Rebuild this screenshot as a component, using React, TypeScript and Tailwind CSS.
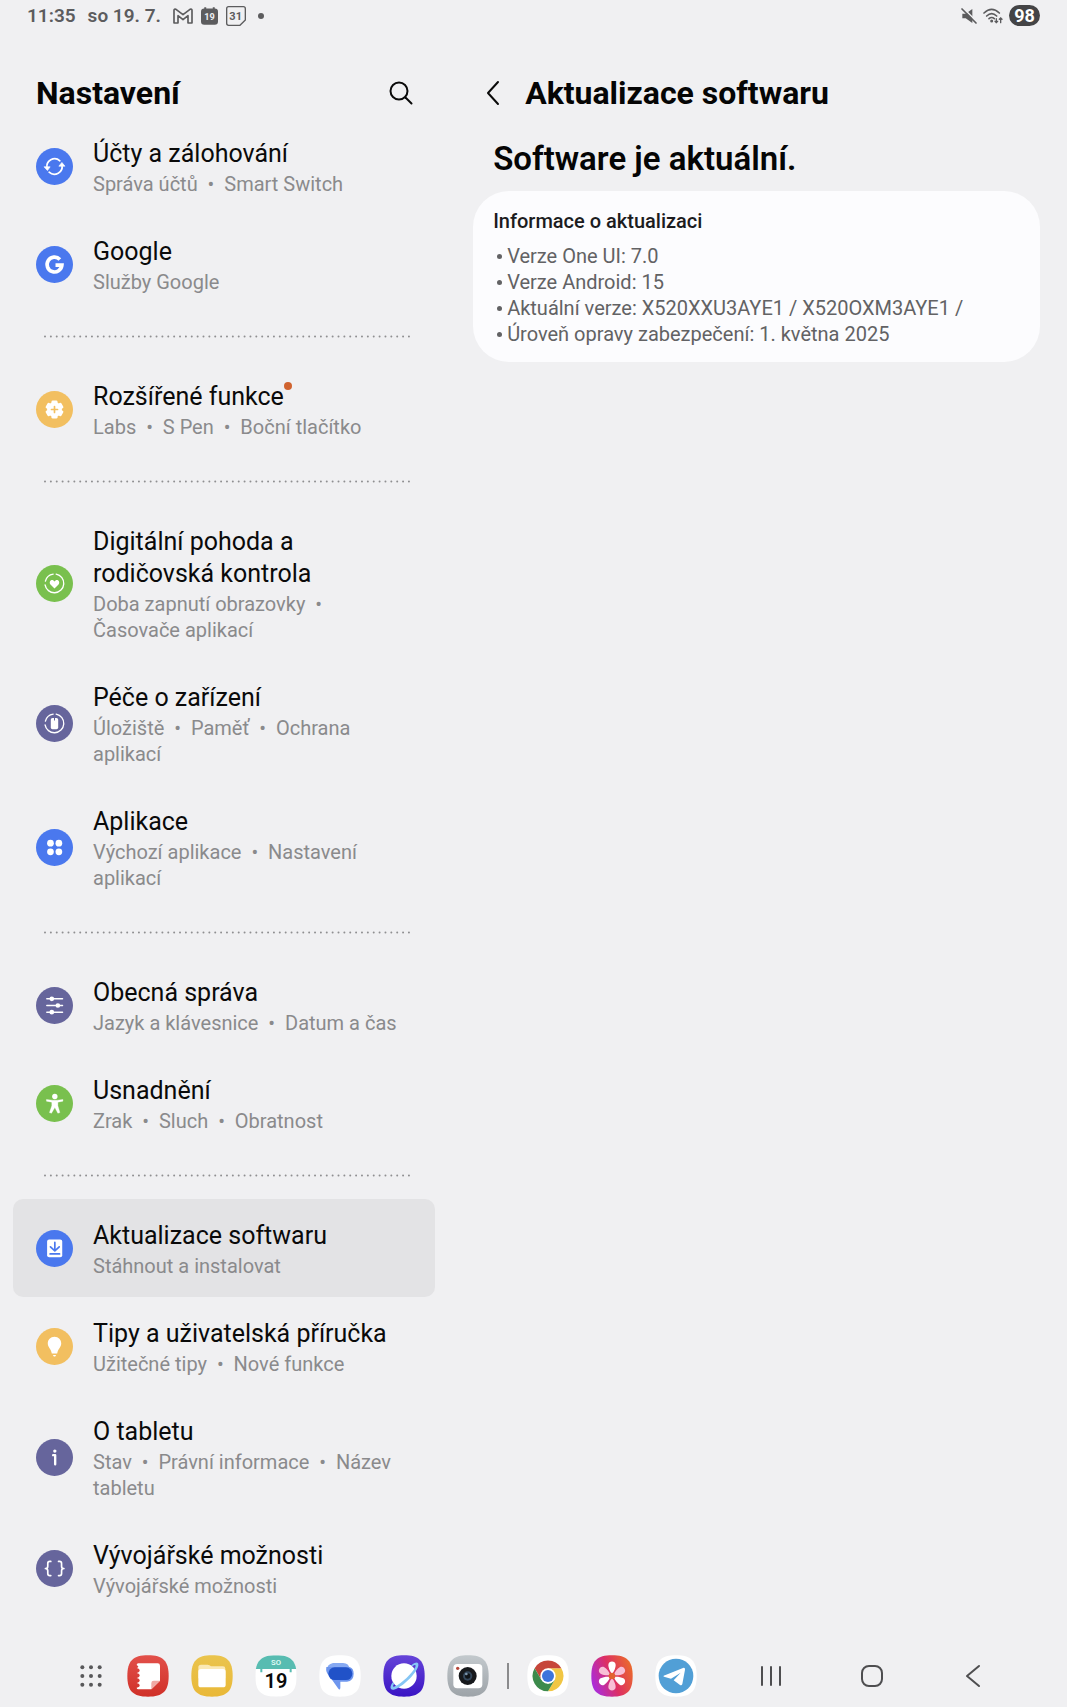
import type { ReactNode } from 'react';

interface SettingsItem {
  id: string;
  title: string;
  details: string[];
  icon: ReactNode;
  hasBadge?: boolean;
}

const BLUE = '#4a78ee';
const YELLOW = '#f2bf60';
const GREEN = '#79c04e';
const PURPLE = '#66659c';

function RoundIcon({ color, children }: { color: string; children: ReactNode }) {
  return (
    <svg className="w-[37px] h-[37px] shrink-0" viewBox="0 0 110 110" fill="none" aria-hidden="true">
      <circle cx="55" cy="55" r="55" fill={color} />
      {children}
    </svg>
  );
}

const groups: SettingsItem[][] = [
  [
    {
      id: 'accounts',
      title: 'Účty a zálohování',
      details: ['Správa účtů', 'Smart Switch'],
      icon: (
        <RoundIcon color={BLUE}>
          <path d="M33 60 A23 23 0 0 1 71 38" stroke="#fff" strokeWidth="5" strokeLinecap="round" />
          <path d="M77 50 A23 23 0 0 1 39 72" stroke="#fff" strokeWidth="5" strokeLinecap="round" />
          <path d="M24 56 L42 56 L34 67 Z" fill="#fff" stroke="#fff" strokeWidth="2" strokeLinejoin="round" />
          <path d="M68 54 L86 54 L77 43 Z" fill="#fff" stroke="#fff" strokeWidth="2" strokeLinejoin="round" />
        </RoundIcon>
      ),
    },
    {
      id: 'google',
      title: 'Google',
      details: ['Služby Google'],
      icon: (
        <RoundIcon color={BLUE}>
          <path d="M71 40 A22 22 0 1 0 77 57 L58 57" stroke="#fff" strokeWidth="11" />
        </RoundIcon>
      ),
    },
  ],
  [
    {
      id: 'advanced',
      title: 'Rozšířené funkce',
      details: ['Labs', 'S Pen', 'Boční tlačítko'],
      hasBadge: true,
      icon: (
        <RoundIcon color={YELLOW}>
          <g fill="#fff">
            <circle cx="55" cy="55" r="22" />
            <rect x="46" y="28" width="18" height="54" rx="4" />
            <rect x="46" y="28" width="18" height="54" rx="4" transform="rotate(60 55 55)" />
            <rect x="46" y="28" width="18" height="54" rx="4" transform="rotate(120 55 55)" />
          </g>
          <path d="M55 46 V64 M46 55 H64" stroke={YELLOW} strokeWidth="5" strokeLinecap="round" />
        </RoundIcon>
      ),
    },
  ],
  [
    {
      id: 'wellbeing',
      title: 'Digitální pohoda a rodičovská kontrola',
      details: ['Doba zapnutí obrazovky', 'Časovače aplikací'],
      icon: (
        <RoundIcon color={GREEN}>
          <path d="M60 27 A28 28 0 1 1 27 59" stroke="#fff" strokeWidth="4" strokeLinecap="round" />
          <path d="M28 48 A28 28 0 0 1 51 27" stroke="#fff" strokeWidth="4" strokeLinecap="round" />
          <path d="M55 70 L43 58 C37 50 45 41 52 46 L55 49 L58 46 C65 41 73 50 67 58 Z" fill="#fff" />
        </RoundIcon>
      ),
    },
    {
      id: 'device-care',
      title: 'Péče o zařízení',
      details: ['Úložiště', 'Paměť', 'Ochrana aplikací'],
      icon: (
        <RoundIcon color={PURPLE}>
          <path d="M60 27 A28 28 0 1 1 27 59" stroke="#fff" strokeWidth="4" strokeLinecap="round" />
          <path d="M28 48 A28 28 0 0 1 51 27" stroke="#fff" strokeWidth="4" strokeLinecap="round" />
          <rect x="44" y="39" width="22" height="33" rx="5" fill="#fff" />
          <path d="M55 38 V46" stroke={PURPLE} strokeWidth="3" />
        </RoundIcon>
      ),
    },
    {
      id: 'apps',
      title: 'Aplikace',
      details: ['Výchozí aplikace', 'Nastavení aplikací'],
      icon: (
        <RoundIcon color={BLUE}>
          <g fill="#fff">
            <circle cx="43" cy="42" r="10" />
            <circle cx="68" cy="42" r="10" />
            <circle cx="43" cy="68" r="10" />
            <circle cx="68" cy="68" r="10" />
          </g>
        </RoundIcon>
      ),
    },
  ],
  [
    {
      id: 'general',
      title: 'Obecná správa',
      details: ['Jazyk a klávesnice', 'Datum a čas'],
      icon: (
        <RoundIcon color={PURPLE}>
          <path d="M32 35 H79 M32 55 H79 M32 75 H79" stroke="#fff" strokeWidth="4" strokeLinecap="round" />
          <circle cx="47" cy="35" r="7" fill="#fff" />
          <circle cx="65" cy="55" r="7" fill="#fff" />
          <circle cx="47" cy="75" r="7" fill="#fff" />
        </RoundIcon>
      ),
    },
    {
      id: 'accessibility',
      title: 'Usnadnění',
      details: ['Zrak', 'Sluch', 'Obratnost'],
      icon: (
        <RoundIcon color={GREEN}>
          <circle cx="56" cy="34" r="8" fill="#fff" />
          <path d="M31 43 L48 45 H64 L80 43 V48 L65 51 V62 L71 82 L65 84 L56 67 L46 84 L40 82 L47 62 V51 L31 48 Z" fill="#fff" stroke="#fff" strokeWidth="1" strokeLinejoin="round" />
        </RoundIcon>
      ),
    },
  ],
  [
    {
      id: 'software-update',
      title: 'Aktualizace softwaru',
      details: ['Stáhnout a instalovat'],
      icon: (
        <RoundIcon color={BLUE}>
          <rect x="33" y="28" width="45" height="53" rx="6" fill="#fff" />
          <path d="M56 37 V61 M43 50 L56 62 L69 50 M42 71 H70" stroke={BLUE} strokeWidth="5" strokeLinecap="round" strokeLinejoin="round" />
        </RoundIcon>
      ),
    },
    {
      id: 'tips',
      title: 'Tipy a uživatelská příručka',
      details: ['Užitečné tipy', 'Nové funkce'],
      icon: (
        <RoundIcon color={YELLOW}>
          <path d="M55 26 C43 26 35 35 35 46 C35 57 45 62 47 76 H63 C65 62 75 57 75 46 C75 35 67 26 55 26 Z" fill="#fff" />
          <path d="M50 80 H60 L57 85 H53 Z" fill="#fff" />
        </RoundIcon>
      ),
    },
    {
      id: 'about',
      title: 'O tabletu',
      details: ['Stav', 'Právní informace', 'Název tabletu'],
      icon: (
        <RoundIcon color={PURPLE}>
          <circle cx="56" cy="36" r="5" fill="#fff" />
          <path d="M51 48 H57 V75" stroke="#fff" strokeWidth="7" strokeLinecap="round" strokeLinejoin="round" />
        </RoundIcon>
      ),
    },
    {
      id: 'developer',
      title: 'Vývojářské možnosti',
      details: ['Vývojářské možnosti'],
      icon: (
        <RoundIcon color={PURPLE}>
          <path
            d="M44 34 H41 C36 34 35 37 35 40 V48 C35 53 32 55 28 55 C32 55 35 57 35 62 V70 C35 73 36 76 41 76 H44 M67 34 H70 C75 34 76 37 76 40 V48 C76 53 79 55 83 55 C79 55 76 57 76 62 V70 C76 73 75 76 70 76 H67"
            stroke="#fff"
            strokeWidth="5"
            strokeLinecap="round"
            strokeLinejoin="round"
          />
        </RoundIcon>
      ),
    },
  ],
];

const updateInfo = [
  'Verze One UI: 7.0',
  'Verze Android: 15',
  'Aktuální verze: X520XXU3AYE1 / X520OXM3AYE1 /',
  'Úroveň opravy zabezpečení: 1. května 2025',
];

function StatusBar() {
  return (
    <div className="flex items-center h-[31px] px-[27px] text-[#5c5c5e]">
      <span className="text-[19px] leading-6 font-semibold">11:35</span>
      <span className="ml-3 text-[19px] leading-6 font-semibold">so 19. 7.</span>
      <svg className="ml-3 w-5 h-4" viewBox="0 0 60 48" fill="none" stroke="currentColor" strokeWidth="5" strokeLinejoin="round" aria-label="Gmail">
        <path d="M3 45 V7 Q3 2 9 4 L30 20 L51 4 Q57 2 57 7 V45 H45 V23 L30 35 L15 23 V45 Z" />
      </svg>
      <svg className="ml-2 w-[17px] h-[18px]" viewBox="0 0 52 54" aria-hidden="true">
        <path d="M10 0 h6 v4 h20 v-4 h6 v4 q10 0 10 10 v30 q0 10 -10 10 h-32 q-10 0 -10 -10 v-30 q0 -10 10 -10 z" fill="currentColor" />
        <text x="26" y="39" fontSize="28" fontWeight="700" textAnchor="middle" fill="#f0f0f2">19</text>
      </svg>
      <svg className="ml-2 w-5 h-5" viewBox="0 0 60 60" fill="none" aria-hidden="true">
        <path d="M8 2 H52 Q58 2 58 8 V42 L42 58 H8 Q2 58 2 52 V8 Q2 2 8 2 Z" stroke="currentColor" strokeWidth="4" strokeLinejoin="round" />
        <text x="29" y="41" fontSize="33" fontWeight="700" textAnchor="middle" fill="currentColor">31</text>
      </svg>
      <span className="ml-3 w-[6px] h-[6px] rounded-full bg-[#5c5c5e]" />

      <div className="ml-auto flex items-center">
        <svg className="w-4 h-4" viewBox="0 0 48 48" aria-label="Ztlumeno">
          <path d="M4 17 H14 L34 3 V45 L14 31 H4 Z" fill="currentColor" />
          <path d="M6 0 L48 42" stroke="#f0f0f2" strokeWidth="5" />
          <path d="M3 3 L45 45" stroke="currentColor" strokeWidth="5" strokeLinecap="round" />
        </svg>
        <svg className="ml-[6px] w-5 h-4" viewBox="0 0 60 48" fill="none" stroke="currentColor" strokeWidth="5" strokeLinecap="round" aria-label="Wi-Fi">
          <path d="M3 15 Q26 -7 49 15" />
          <path d="M11 24 Q26 10 41 24" />
          <path d="M18 32 Q26 25 34 32" />
          <circle cx="26" cy="39" r="2" fill="currentColor" />
          <path d="M40 32 V44 M36 40 L40 44 L44 40 M53 44 V30 M49 34 L53 30 L57 34" strokeWidth="4" />
        </svg>
        <span className="ml-[6px] flex items-center justify-center w-[31px] h-[21px] rounded-full bg-[#444446] text-[18px] leading-5 font-bold text-white">98</span>
      </div>
    </div>
  );
}

function SettingsRow({ item, selected }: { item: SettingsItem; selected: boolean }) {
  return (
    <a
      href={`#${item.id}`}
      aria-current={selected ? 'page' : undefined}
      className={`flex items-center gap-5 pl-[23px] pr-8 rounded-[10px] ${selected ? 'bg-[#e3e3e5]' : ''}`}
    >
      {item.icon}
      <span className="flex flex-col gap-px pt-[21px] pb-[18px]">
        <span className="text-[25px] leading-8 text-[#0a0a0a]">
          <span className="relative">
            {item.title}
            {item.hasBadge && <span className="absolute -right-2 top-0 w-2 h-2 rounded-full bg-[#d0632f]" />}
          </span>
        </span>
        <span className="text-[20px] leading-[26px] text-[#8a8a8c]">
          {item.details.join('\u00a0\u00a0•\u00a0 ')}
        </span>
      </span>
    </a>
  );
}

function DottedDivider() {
  return (
    <div className="h-[47px] flex items-center pl-[31px] pr-6">
      <svg className="w-full h-[3px]" aria-hidden="true">
        <line x1="1" y1="1.5" x2="100%" y2="1.5" stroke="#8f8f91" strokeWidth="2" strokeLinecap="round" strokeDasharray="0 5.87" />
      </svg>
    </div>
  );
}

function AppIcon({ label, children }: { label: string; children: ReactNode }) {
  return (
    <button type="button" aria-label={label} className="w-[42px] h-[42px] shrink-0">
      <svg className="w-full h-full" viewBox="0 0 126 126" fill="none">
        {children}
      </svg>
    </button>
  );
}

const SQUIRCLE = 'M63 1 C108 1 125 18 125 63 C125 108 108 125 63 125 C18 125 1 108 1 63 C1 18 18 1 63 1 Z';
const PETAL = 'M63 58 C56 48 52 38 52 30 C52 16 74 16 74 30 C74 38 70 48 63 58 Z';

function Dock() {
  return (
    <footer className="flex items-center h-[63px] pl-[79px] pr-[82px]">
      <div className="flex items-center gap-[22px]">
        <button type="button" aria-label="Všechny aplikace" className="w-[26px] h-6">
          <svg className="w-6 h-6" viewBox="0 0 72 72" fill="#58585a">
            {[10, 36, 62].map((y) => [10, 36, 62].map((x) => <circle key={`${x}-${y}`} cx={x} cy={y} r="6" />))}
          </svg>
        </button>

        <AppIcon label="Notes">
          <defs>
            <linearGradient id="notes" x1="0" y1="0" x2="0" y2="1">
              <stop stopColor="#e2504a" />
              <stop offset="1" stopColor="#d03028" />
            </linearGradient>
          </defs>
          <path d={SQUIRCLE} fill="url(#notes)" />
          <path d="M34 25 H92 Q99 25 99 32 V77 L73 103 H34 Q29 103 29 98 Q39 96 38 90 Q37 85 29 84 Q39 81 38 75 Q37 70 29 69 Q39 66 38 60 Q37 55 29 54 Q39 51 38 45 Q37 40 29 39 Q39 36 29 30 Q29 25 34 25 Z" fill="#fff" />
          <path d="M99 77 L73 103 V84 Q73 77 80 77 Z" fill="#f0a9a4" />
        </AppIcon>

        <AppIcon label="Soubory">
          <defs>
            <linearGradient id="files" x1="0" y1="0" x2="0" y2="1">
              <stop stopColor="#eac44d" />
              <stop offset="1" stopColor="#e9b838" />
            </linearGradient>
          </defs>
          <path d={SQUIRCLE} fill="url(#files)" />
          <path d="M22 37 Q22 29 30 29 H50 Q56 29 60 34 H96 Q103 34 103 41 V70 H22 Z" fill="#fbe9b5" />
          <rect x="22" y="42" width="82" height="55" rx="8" fill="#fff" />
        </AppIcon>

        <AppIcon label="Kalendář">
          <clipPath id="calendar">
            <path d={SQUIRCLE} />
          </clipPath>
          <g clipPath="url(#calendar)">
            <rect width="126" height="126" fill="#fff" />
            <path d="M0 0 H126 V42 H110 V52 H104 V42 H22 V52 H16 V42 H0 Z" fill="#58bcb1" />
          </g>
          <text x="63" y="31" fontSize="23" fontWeight="500" textAnchor="middle" fill="#e9fffb">SO</text>
          <text x="63" y="100" fontSize="60" fontWeight="600" textAnchor="middle" fill="#0a0a0a">19</text>
        </AppIcon>

        <AppIcon label="Zprávy">
          <path d={SQUIRCLE} fill="#fff" />
          <path d="M42 24 H72 Q90 24 92 42 V60 H40 Q24 60 24 44 Q24 28 42 24 Z" fill="#86a9f2" />
          <path d="M22 36 Q19 52 31 63 L57 100 Q63 108 64 98 V80 H84 Q104 78 104 56 Q104 40 92 36 Z" fill="#6e96ee" />
          <rect x="28" y="37" width="72" height="38" rx="19" fill="#2152c8" />
        </AppIcon>

        <AppIcon label="Internet">
          <defs>
            <linearGradient id="internet" x1="0" y1="0" x2="0" y2="1">
              <stop stopColor="#6544d8" />
              <stop offset="1" stopColor="#3a14c4" />
            </linearGradient>
          </defs>
          <path d={SQUIRCLE} fill="url(#internet)" />
          <circle cx="63" cy="63" r="38" fill="#fff" />
          <path
            d="M84 32 C96 20 108 18 106 32 C103 52 58 98 32 104 C20 106 20 94 29 82 L34 86 C28 94 30 97 36 94 C56 86 88 54 97 36 C100 29 96 28 88 34 Z"
            fill="#86c6f4"
          />
        </AppIcon>

        <AppIcon label="Fotoaparát">
          <defs>
            <linearGradient id="camera" x1="0" y1="0" x2="0" y2="1">
              <stop stopColor="#c3c9cd" />
              <stop offset="1" stopColor="#9da3a8" />
            </linearGradient>
          </defs>
          <path d={SQUIRCLE} fill="url(#camera)" />
          <rect x="19" y="27" width="87" height="73" rx="12" fill="#fff" />
          <circle cx="32" cy="40" r="5" fill="#b5473a" />
          <circle cx="62" cy="63" r="27" fill="#17191c" />
          <circle cx="62" cy="63" r="14" fill="#33465a" />
          <circle cx="62" cy="63" r="8" fill="#101418" />
          <circle cx="58" cy="57" r="4" fill="#7d97ad" />
        </AppIcon>
      </div>

      <span className="mx-[18px] w-[2px] h-[26px] bg-[#8b8b8d]" />

      <div className="flex items-center gap-[22px]">
        <AppIcon label="Chrome">
          <path d={SQUIRCLE} fill="#fff" />
          <path d="M63 40 H103 A46 46 0 0 1 63 109 L83 75 Z" fill="#f1c644" />
          <path d="M23 40 A46 46 0 0 1 103 40 H63 L43 74 Z" fill="#c6463a" />
          <path d="M23 40 L43 74 L63 86 L83 75 L63 109 A46 46 0 0 1 23 40 Z" fill="#3d8b4c" />
          <circle cx="63" cy="63" r="23" fill="#fff" />
          <circle cx="63" cy="63" r="18" fill="#3d74dc" />
        </AppIcon>

        <AppIcon label="Galerie">
          <defs>
            <linearGradient id="gallery" x1="0" y1="0.7" x2="1" y2="0.3">
              <stop stopColor="#a82de0" />
              <stop offset="0.5" stopColor="#dd2f63" />
              <stop offset="1" stopColor="#ea6a2c" />
            </linearGradient>
          </defs>
          <path d={SQUIRCLE} fill="url(#gallery)" />
          {[60, 180, 300].map((angle) => (
            <path key={angle} d={PETAL} fill="#f8bfd6" transform={`rotate(${angle} 63 63)`} />
          ))}
          {[0, 120, 240].map((angle) => (
            <path key={angle} d={PETAL} fill="#fff" transform={`rotate(${angle} 63 63)`} />
          ))}
          <circle cx="63" cy="63" r="10" fill="#e2622f" />
        </AppIcon>

        <AppIcon label="Telegram">
          <path d={SQUIRCLE} fill="#fff" />
          <circle cx="63" cy="63" r="52" fill="#519fd6" />
          <path d="M26 62 L84 39 Q91 37 90 44 L82 87 Q80 93 74 89 L56 76 L77 53 L48 71 L27 65 Q24 63 26 62 Z" fill="#fff" />
        </AppIcon>
      </div>

      <nav className="ml-auto flex items-center gap-[77px]">
        <button type="button" aria-label="Poslední aplikace" className="w-6 h-6">
          <svg className="w-6 h-6" viewBox="0 0 24 24" fill="none" stroke="#4e4e50" strokeWidth="2" strokeLinecap="round">
            <path d="M3 3 V21 M12 3 V21 M21 3 V21" />
          </svg>
        </button>
        <button type="button" aria-label="Domů" className="w-6 h-6">
          <svg className="w-6 h-6" viewBox="0 0 24 24" fill="none" stroke="#4e4e50" strokeWidth="2">
            <rect x="2" y="2" width="20" height="20" rx="7" />
          </svg>
        </button>
        <button type="button" aria-label="Zpět" className="w-6 h-6">
          <svg className="w-6 h-6" viewBox="0 0 24 24" fill="none" stroke="#4e4e50" strokeWidth="2" strokeLinecap="round" strokeLinejoin="round">
            <path d="M18 2 L6 12 L18 22" />
          </svg>
        </button>
      </nav>
    </footer>
  );
}

export default function App() {
  const selectedId = 'software-update';

  return (
    <div className="min-h-screen flex flex-col bg-[#f0f0f2] font-[Roboto,'Noto_Sans',sans-serif]">
      <StatusBar />

      <div className="flex flex-1">
        <aside className="w-[42%] shrink-0 px-[13px] pt-[38px]">
          <header className="flex items-center justify-between h-12 pl-[23px] pr-[22px]">
            <h1 className="text-[32px] leading-[48px] font-bold text-[#050505]">Nastavení</h1>
            <button type="button" aria-label="Hledat" className="w-6 h-6">
              <svg className="w-6 h-6" viewBox="0 0 24 24" fill="none" stroke="#0a0a0a" strokeWidth="2" strokeLinecap="round">
                <circle cx="10" cy="10" r="8.5" />
                <path d="M16.5 16.5 L22.500 22.500" />
              </svg>
            </button>
          </header>

          <nav aria-label="Nastavení">
            {groups.map((group, index) => (
              <div key={index}>
                {index > 0 && <DottedDivider />}
                {group.map((item) => (
                  <SettingsRow key={item.id} item={item} selected={item.id === selectedId} />
                ))}
              </div>
            ))}
          </nav>
        </aside>

        <main className="flex-1 pl-[25px] pr-[27px] pt-[38px]">
          <header className="flex items-center h-12 pl-2 gap-4">
            <button type="button" aria-label="Zpět" className="w-7 h-7">
              <svg className="w-7 h-7" viewBox="0 0 28 28" fill="none" stroke="#0a0a0a" strokeWidth="2" strokeLinecap="round" strokeLinejoin="round">
                <path d="M17 3 L7 14 L17 25" />
              </svg>
            </button>
            <h2 className="text-[32px] leading-[48px] font-bold text-[#050505]">Aktualizace softwaru</h2>
          </header>

          <p className="mt-[18px] pl-5 text-[33px] leading-[48px] font-semibold text-[#050505]">Software je aktuální.</p>

          <section className="mt-2 rounded-[36px] bg-[#fcfcfe] px-5 pt-4 pb-[15px]">
            <h3 className="text-[20px] leading-7 font-medium text-[#1c1c1e]">Informace o aktualizaci</h3>
            <ul className="mt-2 text-[20px] leading-[26px] text-[#626264]">
              {updateInfo.map((line) => (
                <li key={line} className="flex items-center gap-[5px] pl-1">
                  <span className="w-[5px] h-[5px] rounded-full bg-[#626264]" />
                  {line}
                </li>
              ))}
            </ul>
          </section>
        </main>
      </div>

      <Dock />
    </div>
  );
}
